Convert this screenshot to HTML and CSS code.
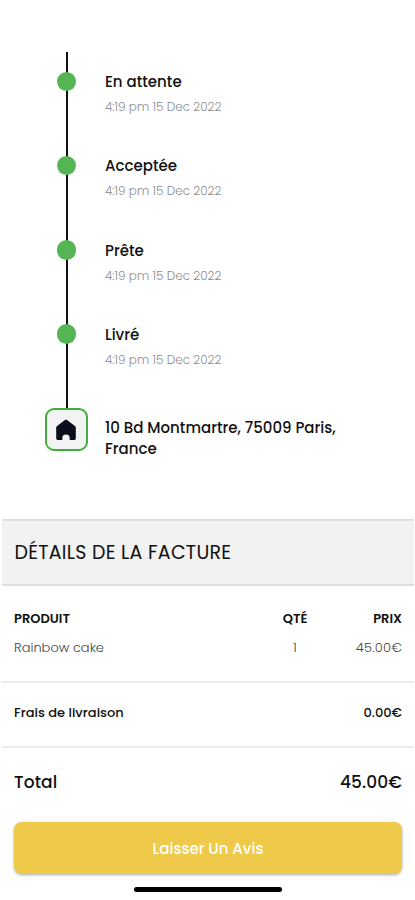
FILE: index.html
```html
<!DOCTYPE html>
<html lang="fr">
<head>
<meta charset="utf-8">
<meta name="viewport" content="width=device-width, initial-scale=1">
<title>Détails de la commande</title>
<link rel="stylesheet" href="styles.css">
</head>
<body>
<main class="screen">
  <ol class="timeline">
    <li class="step"><span class="rail"><i class="dot"></i></span><div class="info"><h3>En attente</h3><p>4:19 pm 15 Dec 2022</p></div></li>
    <li class="step"><span class="rail"><i class="dot"></i></span><div class="info"><h3>Acceptée</h3><p>4:19 pm 15 Dec 2022</p></div></li>
    <li class="step"><span class="rail"><i class="dot"></i></span><div class="info"><h3>Prête</h3><p>4:19 pm 15 Dec 2022</p></div></li>
    <li class="step"><span class="rail"><i class="dot"></i></span><div class="info"><h3>Livré</h3><p>4:19 pm 15 Dec 2022</p></div></li>
    <li class="destination">
      <span class="home">
        <svg width="22" height="22" viewBox="0 0 22 22"><path d="M10 .9a1.600 1.600 0 0 1 2 0l7.900 6.100c.6.500.9 1 .9 1.700V19c0 1.400-.7 2.100-2 2.100h-3.200c-.7 0-1-.4-1-1v-1.600c0-2-1.200-3.100-3.600-3.100s-3.600 1.100-3.600 3.100v1.600c0 .6-.3 1-1 1H3.200c-1.300 0-2-.7-2-2.100V8.700c0-.7.300-1.200.9-1.700z" fill="#0b0f1c"/></svg>
      </span>
      <address>10 Bd Montmartre, 75009 Paris,<br>France</address>
    </li>
  </ol>

  <h2 class="bill-title">DÉTAILS DE LA FACTURE</h2>

  <section class="products">
    <div class="row head"><span class="name">PRODUIT</span><span class="qty">QTÉ</span><span class="price">PRIX</span></div>
    <div class="row item"><span class="name">Rainbow cake</span><span class="qty">1</span><span class="price">45.00€</span></div>
  </section>
  <section class="shipping"><span>Frais de livraison</span><span>0.00€</span></section>
  <section class="total"><span>Total</span><span>45.00€</span></section>

  <button class="review" type="button">Laisser Un Avis</button>
  <div class="home-indicator"></div>
</main>
</body>
</html>
```
FILE: styles.css
```css
* { box-sizing: border-box; }
body { margin: 0; background: #fff; color: #111; font-family: Poppins, Inter, "Open Sans", sans-serif; }
h2, h3, p, ol { margin: 0; padding: 0; }
.screen { height: 900px; padding-top: 52px; overflow: hidden; }

.timeline { list-style: none; height: 467px; }
.step { display: flex; height: 84.3px; }
.rail { flex: none; width: 2px; margin-left: 65.500px; height: 104px; background: #111; }
.dot { display: block; width: 19.500px; height: 19.500px; margin: 19.500px 0 0 -8.700px; border-radius: 50%; background: #55b453; }
.info { margin-left: 37.500px; padding-top: 20px; white-space: nowrap; }
.info h3 { font-size: 15px; line-height: 20px; font-weight: 500; }
.info p { margin-top: 6px; font-size: 12px; line-height: 18px; color: #8c8c8c; font-weight: 300; }
.destination { display: flex; padding: 19px 0 0 45px; }
.home { position: relative; display: flex; align-items: center; justify-content: center; width: 43px; height: 43px; padding-right: 1px; border: 2px solid #43ae40; border-radius: 9px; background: #f3f3f3; }
address { margin: 8.700px 0 0 17px; font-style: normal; font-size: 15px; line-height: 21.500px; font-weight: 500; white-space: nowrap; }

.bill-title { display: flex; align-items: center; height: 67px; margin: 0 1px 0 2px; padding: 0 0 0 12.500px; border-top: 2px solid #dedede; border-bottom: 2px solid #dedede; background: #f2f2f2; font-size: 19px; font-weight: 400; letter-spacing: .27px; white-space: nowrap; }

.products { height: 97px; margin: 0 1px 0 2px; padding: 23px 12px 0; border-bottom: 2px solid #ececec; }
.row { display: grid; grid-template-columns: 1fr 60px 77px; font-size: 13px; line-height: 20px; white-space: nowrap; }
.row + .row { margin-top: 9px; }
.qty { text-align: center; }
.price { text-align: right; }
.head { font-weight: 600; }
.item { font-weight: 300; color: #444; }
.item .price { letter-spacing: .2px; }
.shipping, .total { display: flex; justify-content: space-between; align-items: center; margin: 0 1px 0 2px; padding: 0 12px; font-weight: 500; }
.shipping { height: 65px; padding-bottom: 4px; border-bottom: 2px solid #ececec; font-size: 13px; }
.total { height: 74px; padding-bottom: 6px; font-size: 17px; letter-spacing: .1px; }

.review { display: block; width: 388px; height: 52px; margin: 0 0 0 14px; border: 0; border-radius: 8px; background: #efc94a; box-shadow: 0 1px 3px rgba(0, 0, 0, .35); color: #fff; font: 500 15px Poppins, Inter, sans-serif; }
.home-indicator { width: 148px; height: 5px; margin: 12.500px 0 0 134px; border-radius: 3px; background: #000; }
```
